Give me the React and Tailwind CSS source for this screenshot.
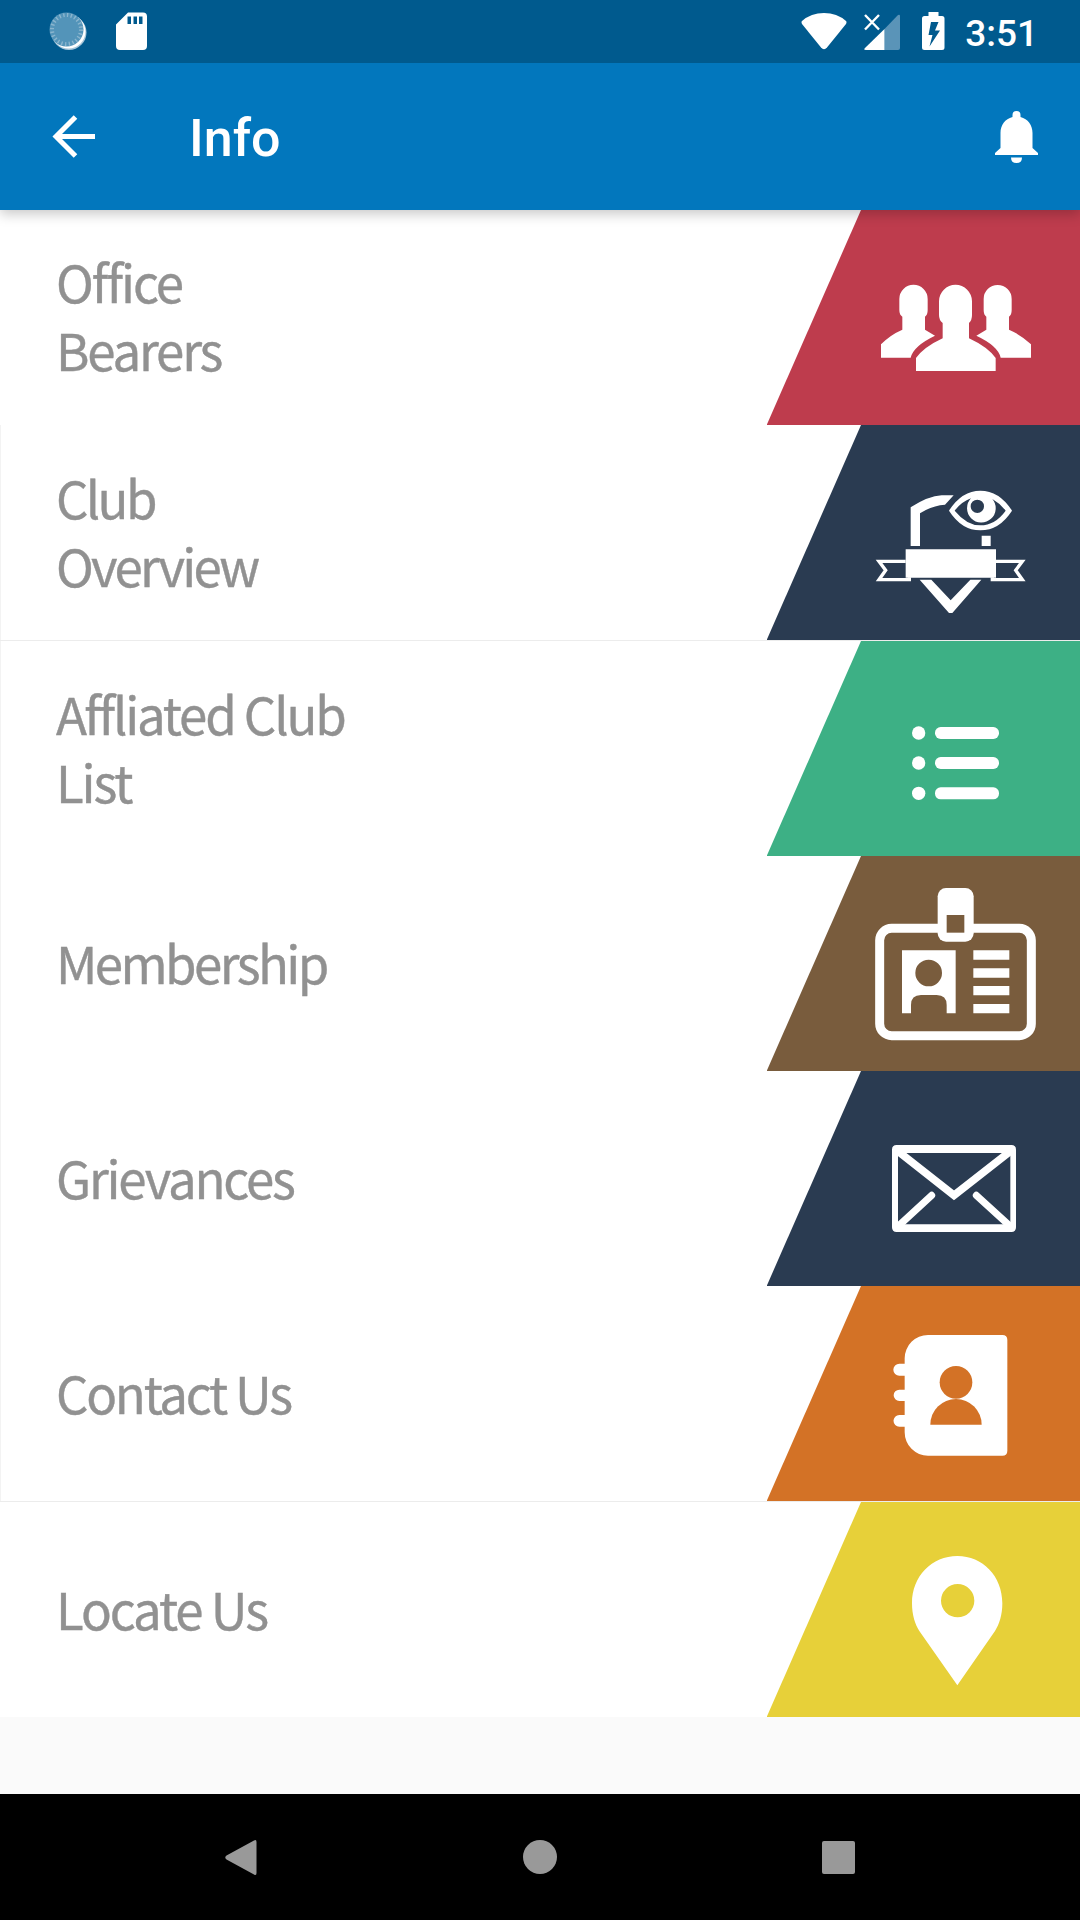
const rows = [
  {
    lines: [['Office', 'tracking-[-2px]'], ['Bearers', 'tracking-[-2.2px]']],
    color: 'fill-[#be3c4d]',
    viewBox: '51 30 939 645',
    Icon: PeopleIcon,
    textClass: 'pl-[56px] pb-[4px]',
  },
  {
    lines: [['Club', 'tracking-[-2.7px]'], ['Overview', 'tracking-[-2.8px]']],
    color: 'fill-[#2a3b51]',
    viewBox: '51 15 939 645',
    Icon: OverviewIcon,
    edge: true,
  },
  {
    lines: [['Affliated Club', 'tracking-[-2.2px]'], ['List', 'tracking-[-2.1px]']],
    color: 'fill-[#3db085]',
    viewBox: '51 18 939 645',
    Icon: ListIcon,
    edge: true,
    divider: true,
  },
  {
    lines: [['Membership', 'tracking-[-2.6px]']],
    color: 'fill-[#795c3d]',
    viewBox: '51 18 939 645',
    Icon: BadgeIcon,
    edge: true,
  },
  {
    lines: [['Grievances', 'tracking-[-2.2px]']],
    color: 'fill-[#2a3b51]',
    viewBox: '51 18 939 645',
    Icon: MailIcon,
    edge: true,
  },
  {
    lines: [['Contact Us', 'tracking-[-2.3px]']],
    color: 'fill-[#d37226]',
    viewBox: '51 18 939 645',
    Icon: ContactIcon,
    edge: true,
  },
  {
    lines: [['Locate Us', 'tracking-[-2.1px]']],
    color: 'fill-[#e7d039]',
    viewBox: '51 21 939 645',
    Icon: PinIcon,
    divider: true,
  },
];

function PeopleIcon() {
  return (
    <g fill="#fff">
      <path d="M393 473V433Q420 405 457 389V350Q448 345 448 330V297A42 42 0 0 1 533 297V330Q533 345 525 350V389L555 407Q490 438 482 473Z" />
      <path d="M843 473V433Q814 405 777 389V350Q785 345 785 330V297A42 42 0 0 0 701 297V330Q701 345 709 350V389L679 407Q745 438 752 473Z" />
      <path d="M498 513V474Q522 441 578 415V369Q567 361 567 345V304A49.500 49.500 0 0 1 666 304V345Q666 361 657 369V415Q713 441 737 474V513Z" />
    </g>
  );
}

function OverviewIcon() {
  return (
    <g fill="#fff">
      <path d="M482 378V262Q535 228 575 226H611L585 254Q545 257 510 280V378Z" />
      <path fillRule="evenodd" d="M597 272Q635 212 691 212Q748 212 786 272Q748 331 691 331Q635 331 597 272ZM614 272Q650 316 691 316Q735 316 767 272Q750 250 727 237A43 43 0 1 1 663 235Q635 245 614 272ZM682 239A20 20 0 1 0 682 279A20 20 0 1 0 682 239Z" />
      <path d="M695 347H722V378H695ZM467 388H738V473H467Z" />
      <path d="M509 479H544L602 541L661 479H694L607 579H597Z" />
      <path d="M467 424H387L407 451L387 479H478V472M738 424H817L797 451L817 479H727V472" fill="none" stroke="#fff" strokeWidth="10" />
    </g>
  );
}

function ListIcon() {
  return (
    <g fill="#fff">
      {[294, 384, 475].map((y) => (
        <g key={y}>
          <circle cx="506" cy={y} r="20" />
          <rect x="555" y={y - 18} width="192" height="36" rx="17" />
        </g>
      ))}
    </g>
  );
}

function BadgeIcon() {
  return (
    <g fill="#fff">
      <rect x="389" y="235" width="455" height="322" rx="36" fill="none" stroke="#fff" strokeWidth="27" />
      <rect x="563" y="114" width="108" height="161" rx="25" />
      <rect x="590" y="195" width="53" height="53" fill="#795c3d" />
      <path fillRule="evenodd" d="M456 301H617V490H590V465Q590 435 560 435H513Q483 435 483 465V490H456ZM536 329A40 40 0 1 0 536 409A40 40 0 1 0 536 329Z" />
      <path d="M670 301H778V329H670ZM670 355H778V383H670ZM670 408H778V436H670ZM670 462H778V490H670Z" />
    </g>
  );
}

function MailIcon() {
  return (
    <g fill="none" stroke="#fff">
      <path d="M426 254Q426 240 440 240H784Q798 240 798 254V487Q798 501 784 501H440Q426 501 426 487ZM444 264V478H781V264Z" fill="#fff" fillRule="evenodd" stroke="none" />
      <path d="M444 259L612 391L781 259" strokeWidth="23" />
      <path d="M444 484L545 391M781 484L679 391" strokeWidth="21" strokeLinecap="round" />
    </g>
  );
}

function ContactIcon() {
  return (
    <>
      <path d="M534 165H757Q772 165 772 180V512Q772 527 757 527H534A70 70 0 0 1 464 457V440H448A17 17 0 0 1 448 405H464V363H448A17 17 0 0 1 448 329H464V287H448A17 17 0 0 1 448 251H464V235A70 70 0 0 1 534 165Z" fill="#fff" />
      <g fill="#d37226">
        <circle cx="618" cy="307" r="49" />
        <path d="M541 434A77 77 0 0 1 695 434Z" />
      </g>
    </>
  );
}

function PinIcon() {
  return (
    <path d="M622 183C698 183 757 243 757 325C757 360 748 388 735 408L622 571L508 408C495 388 486 360 486 325C486 243 546 183 622 183ZM623 267A50 50 0 1 0 623 367A50 50 0 1 0 623 267Z" fill="#fff" fillRule="evenodd" />
  );
}

function StatusBar() {
  return (
    <div className="relative z-20 flex h-[63px] items-start bg-[#005a8e] text-white">
      {/* Sync spinner */}
      <svg className="mt-3 ml-[49px] h-[39px] w-[39px]" viewBox="0 0 39 39">
        <circle cx="20" cy="20.500" r="17.500" fill="#a5c5d9" />
        <circle cx="19.500" cy="19.500" r="17" fill="#fff" />
        <circle cx="17.500" cy="17.500" r="17" fill="#5394b9" />
        <circle cx="17.500" cy="17.500" r="14.500" fill="none" stroke="#8ab5ce" strokeWidth="4" strokeDasharray="1.400 2.396" />
      </svg>
      {/* SD card */}
      <svg className="mt-3 ml-7 h-[39px] w-[31px]" viewBox="0 0 31 39">
        <path d="M12 0.500H27Q31 0.500 31 4.500V34Q31 38 27 38H4Q0 38 0 34V12.500ZM11.500 4.500V12H15V4.500ZM17.500 4.500V12H21V4.500ZM23 4.500V12H26.500V4.500Z" fill="currentColor" fillRule="evenodd" />
      </svg>
      {/* Wifi */}
      <svg className="mt-3 ml-auto h-[38px] w-[46px]" viewBox="0 0 46 38">
        <path d="M1 9Q10 1 23 1Q36 1 45 9Q46 10 45 12L26 35.500Q23 39 20 35.500L1 12Q0 10 1 9Z" fill="currentColor" />
      </svg>
      {/* Mobile signal */}
      <svg className="mt-[14px] ml-[17px] h-9 w-9" viewBox="0 0 36 36">
        <path d="M20.500 15L34 1Q36 0 36 2V34Q36 36 34 36H20.500Z" fill="#5a94b8" />
        <path d="M20.500 15V36H2Q-1 36 1 34Z" fill="currentColor" />
        <path d="M1 1L15 15.500M15 1L1 15.500" stroke="currentColor" strokeWidth="2.400" />
      </svg>
      {/* Battery */}
      <svg className="mt-3 ml-[22px] h-[38px] w-[23px]" viewBox="0 0 23 38">
        <path d="M6.500 0H16.500V4H20Q22.500 4 22.500 6.500V35.500Q22.500 38 20 38H2.500Q0 38 0 35.500V6.500Q0 4 2.500 4H6.500ZM9 10L6.500 23H10.500L7.500 34.500L18 18.500H13L16.500 10Z" fill="currentColor" fillRule="evenodd" />
      </svg>
      <span className="mt-[13px] mr-[42px] ml-5 font-[Roboto] text-[37px] leading-[42px] font-medium">3:51</span>
    </div>
  );
}

function AppBar() {
  return (
    <div className="relative z-10 flex h-[147px] items-center bg-[#0277bd] text-white shadow-[0_4px_12px_rgba(0,0,0,0.22)]">
      <svg className="ml-[52px] h-[43px] w-[43px]" viewBox="0 0 43 43" fill="none" stroke="currentColor" strokeWidth="5">
        <path d="M43 21.500H4M23.500 2L4 21.500L23.500 41" />
      </svg>
      <h1 className="ml-[94px] pt-1 font-[Roboto] text-[52px] leading-[60px] font-medium">Info</h1>
      <svg className="mt-px mr-[42px] ml-auto h-[52px] w-[43px]" viewBox="0 0 43 52" fill="currentColor">
        <path d="M17.500 6V4Q17.500 0 21.500 0T25.500 4V6C33 8 37.500 14 37.500 22V37L43 42V44H0V42L5.500 37V22C5.500 14 10 8 17.500 6ZM16 46.500H27Q27 52 21.500 52T16 46.500Z" />
      </svg>
    </div>
  );
}

function MenuRow({ lines, color, viewBox, Icon, edge, divider, textClass }) {
  const top = viewBox.split(' ')[1];

  return (
    <>
      {divider && <div className="h-px bg-[#ececec]" />}
      <div className={`flex h-[215px] items-center justify-between bg-white ${edge ? 'border-l border-[#f3f3f3]' : ''}`}>
        <div
          className={`font-['Noto_Sans_CJK_JP','Noto_Sans_CJK_SC',sans-serif] text-[51px] leading-[67.6px] text-[#919191] [-webkit-text-stroke:0.4px_#919191] ${
            textClass || (edge ? 'pl-[55px] pb-[2px]' : 'pl-[56px] pb-[2px]')
          }`}
        >
          {lines.map(([text, tracking]) => (
            <div key={text} className={tracking}>{text}</div>
          ))}
        </div>
        <svg className="h-[215px] w-[313px]" viewBox={viewBox}>
          <path d={`M333 ${top}H990v645H50Z`} className={color} />
          <Icon />
        </svg>
      </div>
    </>
  );
}

function NavBar() {
  return (
    <div className="flex h-[126px] items-center justify-between bg-black pr-[225px] pl-[225px] text-[#999]">
      <svg className="h-[35px] w-[32px]" viewBox="0 0 32 35" fill="currentColor">
        <path d="M29 0.500Q31.500 -1 31.500 2V33Q31.500 36 29 34.500L1.500 19.500Q-1 17.500 1.500 15.500Z" />
      </svg>
      <div className="mb-px size-[34px] rounded-full bg-current" />
      <div className="size-[33px] rounded-xs bg-current" />
    </div>
  );
}

export default function App() {
  return (
    <div className="flex h-[1920px] w-[1080px] flex-col overflow-hidden bg-[#fafafa]">
      <StatusBar />
      <AppBar />
      <div className="flex-1">
        {rows.map((row) => (
          <MenuRow key={row.lines[0][0]} {...row} />
        ))}
      </div>
      <NavBar />
    </div>
  );
}
